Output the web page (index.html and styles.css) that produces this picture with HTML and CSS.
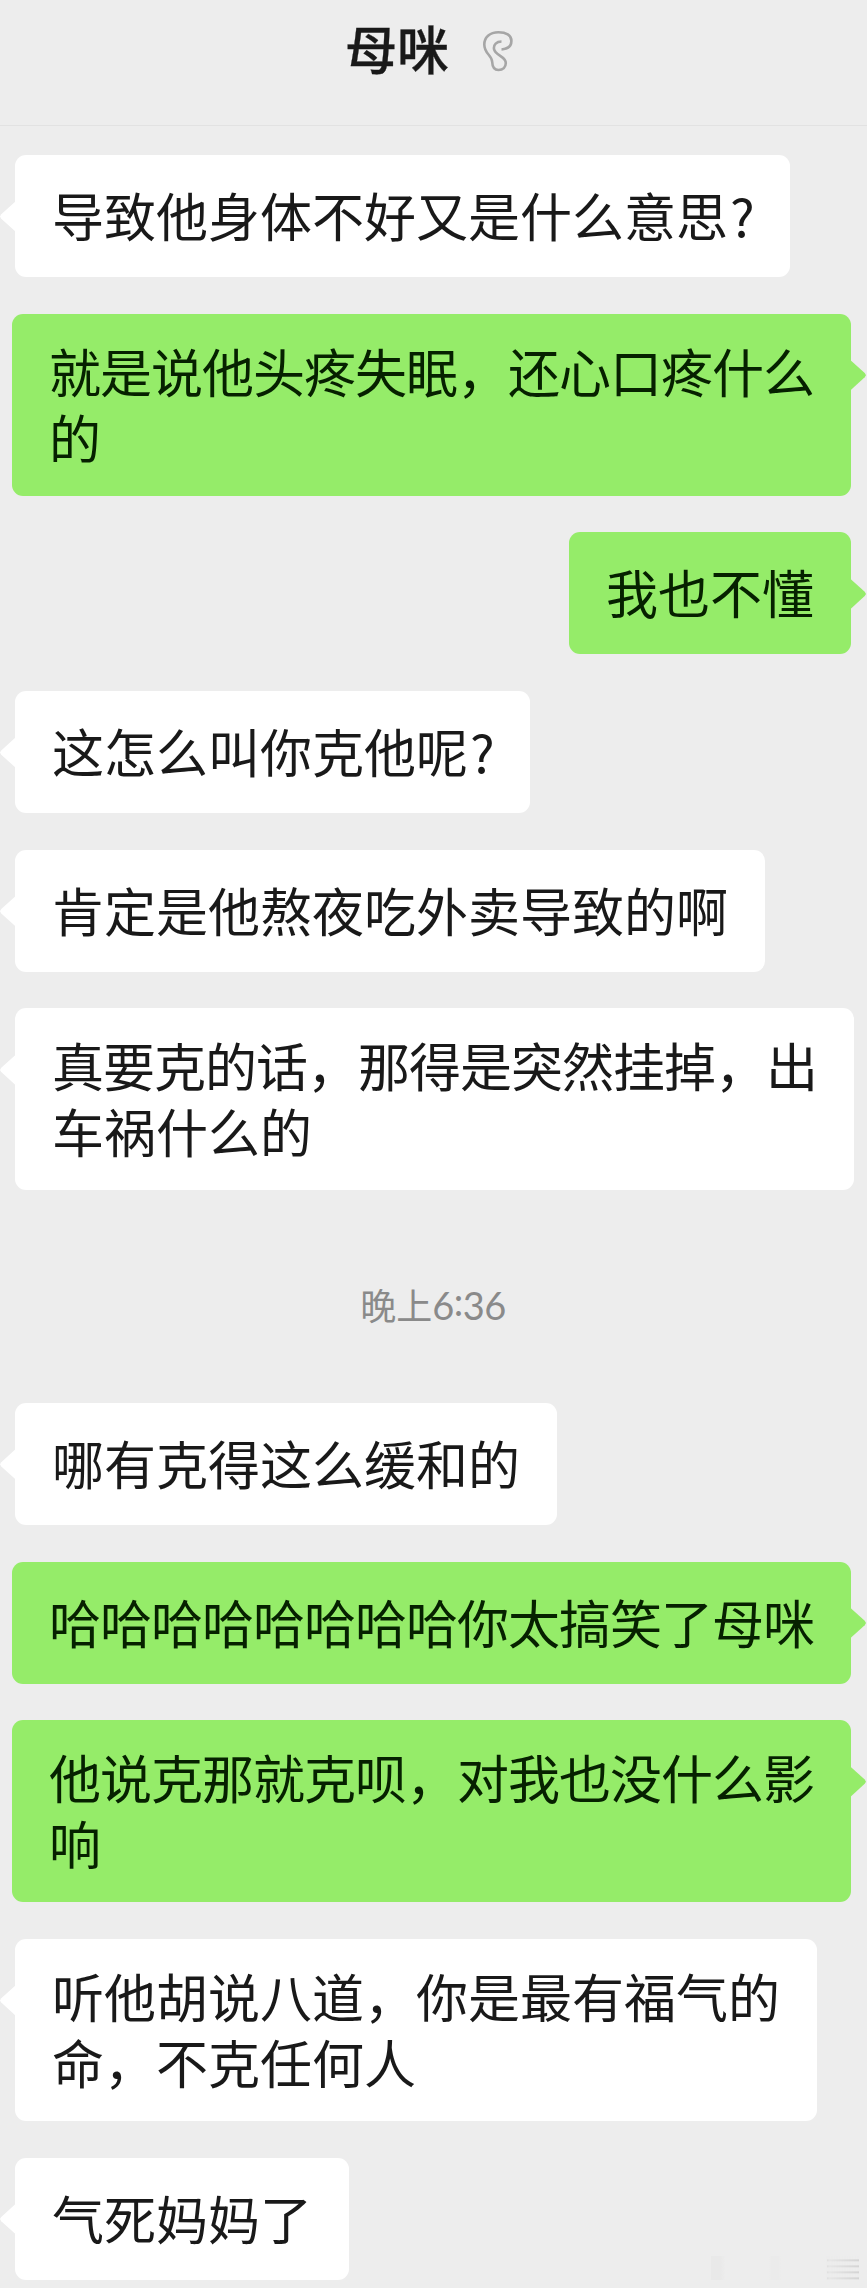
FILE: index.html
```
<!DOCTYPE html>
<html lang="zh-CN">
<head>
<meta charset="utf-8">
<title>母咪</title>
<link rel="stylesheet" href="styles.css">
</head>
<body>
<header class="header">
  <h1 class="title">母咪</h1>
  <svg class="ear" width="34" height="44" viewBox="0 0 34 44" fill="none" stroke="#a6a6a6" stroke-width="2.6">
    <path d="M20.500 20.500C27 20 30.400 16.800 30.400 12C30.400 6 25 3.300 17.500 3.300C8.500 3.300 3.300 8.500 3.300 15.500C3.300 25 11 26 11.200 33C11.400 38.500 13 41 17.500 41C22 41 24.800 38 24.800 34C24.800 27 14 26.500 13 20C12.400 15.500 15.500 12.500 20.500 12.500"/>
  </svg>
</header>
<main class="chat">
  <div class="row in"><p class="bubble">导致他身体不好又是什么意思<span class="mark">?</span></p></div>
  <div class="row out"><p class="bubble multi tight">就是说他头疼失眠，还心口疼什么<br>的</p></div>
  <div class="row out"><p class="bubble">我也不懂</p></div>
  <div class="row in"><p class="bubble">这怎么叫你克他呢<span class="mark">?</span></p></div>
  <div class="row in"><p class="bubble">肯定是他熬夜吃外卖导致的啊</p></div>
  <div class="row in"><p class="bubble multi"><span class="tight">真要克的话，那得是突然挂掉，出</span><br>车祸什么的</p></div>
  <time class="time">晚上<span class="digits">6<span class="colon">:</span>36</span></time>
  <div class="row in"><p class="bubble">哪有克得这么缓和的</p></div>
  <div class="row out"><p class="bubble tight">哈哈哈哈哈哈哈哈你太搞笑了母咪</p></div>
  <div class="row out"><p class="bubble multi tight">他说克那就克呗，对我也没什么影<br>响</p></div>
  <div class="row in"><p class="bubble multi">听他胡说八道，你是最有福气的<br>命，不克任何人</p></div>
  <div class="row in"><p class="bubble">气死妈妈了</p></div>
</main>
<div class="smudge"></div>
</body>
</html>
```
FILE: styles.css
```
* { box-sizing: border-box; }
body {
  margin: 0;
  height: 2288px;
  position: relative;
  overflow: hidden;
  background: #ededed;
  color: #191919;
  font-family: "Noto Sans CJK SC", "Liberation Sans", sans-serif;
}
.header {
  height: 126px;
  padding: 10px 0 0 345px;
  display: flex;
  align-items: flex-start;
  gap: 32px;
  border-bottom: 1px solid #e2e2e2;
}
.title {
  margin: 0;
  font-size: 52px;
  line-height: 75px;
  font-weight: 500;
  -webkit-text-stroke: 0.3px #191919;
}
.ear { margin-top: 19px; }
.chat {
  display: flex;
  flex-direction: column;
  gap: 36.7px;
  padding: 29px 16px 0 15px;
}
.row { display: flex; }
.out { justify-content: flex-end; }
.bubble {
  position: relative;
  margin: 0;
  padding: 27px 37px 29px;
  border-radius: 11px;
  background: #fff;
  font-size: 52px;
  line-height: 66px;
  white-space: nowrap;
}
.multi { padding-top: 24px; padding-bottom: 26px; }
.tight { letter-spacing: -1px; }
.mark { margin: 0 -2px 0 2px; }
.out .bubble { background: #95ec69; color: #062100; }
.bubble::before {
  content: "";
  position: absolute;
  top: 46px;
  left: -15px;
  width: 16px;
  height: 31px;
  background: inherit;
  clip-path: polygon(100% 0, 8% 43%, 0 50%, 8% 57%, 100% 100%);
}
.out .bubble::before {
  left: auto;
  right: -15px;
  transform: scaleX(-1);
}
.time {
  align-self: center;
  margin: 46.5px 0 32.5px;
  font-size: 36px;
  line-height: 60px;
  color: #8a8a8a;
}
.digits {
  font-family: Lato, "Liberation Sans", sans-serif;
  font-size: 38px;
  line-height: 1;
  letter-spacing: -0.5px;
}
.colon {
  position: relative;
  top: -4px;
}
.smudge {
  position: absolute;
  right: 8px;
  bottom: 8px;
  width: 148px;
  height: 24px;
  background:
    repeating-linear-gradient(#ededed00 0 3px, #c4c4c4 4px, #ededed00 6px) right / 32px 24px no-repeat,
    linear-gradient(90deg, #e5e5e5 0 10px, #ececec 14px 58px, #e8e8e8 61px 67px, #ececec 70px);
  -webkit-mask-image: linear-gradient(90deg, #0008, #0008 78%, #0003 80%, #000c);
}
```
